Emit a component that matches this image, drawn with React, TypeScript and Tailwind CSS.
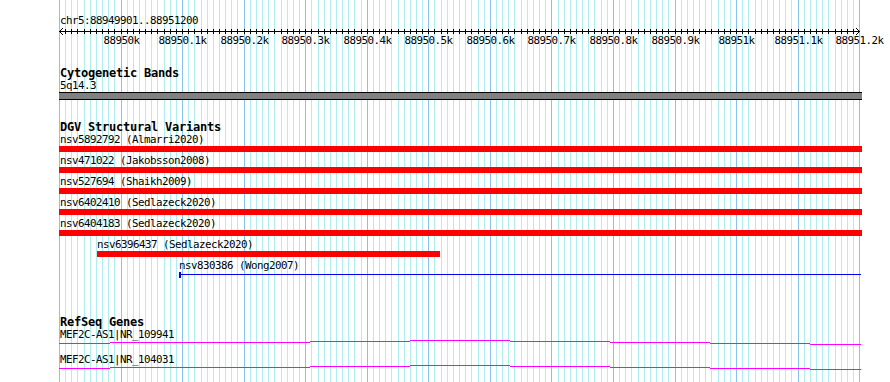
const START = 88949900;
const SCALE = 0.6155;
const LEFT = 59;
const RIGHT = 862;

const px = (bp: number) => Math.round(LEFT + (bp - START) * SCALE);

const gridLines = Array.from({ length: 131 }, (_, i) => START + i * 10);

const tickLabels = [
  [88950000, "88950k"],
  [88950100, "88950.1k"],
  [88950200, "88950.2k"],
  [88950300, "88950.3k"],
  [88950400, "88950.4k"],
  [88950500, "88950.5k"],
  [88950600, "88950.6k"],
  [88950700, "88950.7k"],
  [88950800, "88950.8k"],
  [88950900, "88950.9k"],
  [88951000, "88951k"],
  [88951100, "88951.1k"],
  [88951200, "88951.2k"],
] as const;

type Variant = {
  name: string;
  start: number;
  end: number;
  kind: "bar" | "line";
};

const variants: Variant[] = [
  { name: "nsv5892792 (Almarri2020)", start: 88949000, end: 88952000, kind: "bar" },
  { name: "nsv471022 (Jakobsson2008)", start: 88949000, end: 88952000, kind: "bar" },
  { name: "nsv527694 (Shaikh2009)", start: 88949000, end: 88952000, kind: "bar" },
  { name: "nsv6402410 (Sedlazeck2020)", start: 88949000, end: 88952000, kind: "bar" },
  { name: "nsv6404183 (Sedlazeck2020)", start: 88949000, end: 88952000, kind: "bar" },
  { name: "nsv6396437 (Sedlazeck2020)", start: 88949962, end: 88950519, kind: "bar" },
  { name: "nsv830386 (Wong2007)", start: 88950095, end: 88952000, kind: "line" },
];

const genes = ["MEF2C-AS1|NR_109941", "MEF2C-AS1|NR_104031"];

// intron connector, drawn stepwise like the original raster
const geneSteps = [
  [59, 110, 3],
  [110, 310, 2],
  [310, 410, 1],
  [410, 510, 0],
  [510, 610, 1],
  [610, 710, 2],
  [710, 810, 3],
  [810, 861, 4],
];

function GridLines() {
  return (
    <svg
      className="absolute inset-0"
      width={890}
      height={382}
      shapeRendering="crispEdges">
      {gridLines.map((bp) => {
        const major = (bp - START) % 100 === 0;
        return (
          <rect
            key={bp}
            x={px(bp)}
            y={0}
            width={1}
            height={382}
            fill={major ? "#86c4ee" : "#aeeef0"}
          />
        );
      })}
    </svg>
  );
}

function Ruler() {
  return (
    <div className="relative h-[20px]">
      <svg className="block" width={890} height={8} shapeRendering="crispEdges">
        <rect x={LEFT} y={4} width={801} height={1} fill="#000" />
        {gridLines.slice(1, -1).map((bp) => (
          <rect key={bp} x={px(bp)} y={2} width={1} height={5} fill="#000" />
        ))}
        <polyline
          points="63,1 59.5,4.5 63,8"
          fill="none"
          stroke="#000"
          shapeRendering="auto"
        />
        <polyline
          points="856,1 859.5,4.5 856,8"
          fill="none"
          stroke="#000"
          shapeRendering="auto"
        />
      </svg>
      {tickLabels.map(([bp, label]) => (
        <span
          key={bp}
          className="absolute top-[8px] -translate-x-1/2 whitespace-nowrap"
          style={{ left: px(bp) + 0.5 }}>
          {label}
        </span>
      ))}
    </div>
  );
}

function TrackTitle({ children }: { children: string }) {
  return (
    <div className="translate-y-px pl-[60px] text-[12px] leading-[13px] font-bold tracking-[-0.22px]">
      {children}
    </div>
  );
}

function VariantRow({ v }: { v: Variant }) {
  const x0 = Math.max(px(v.start), LEFT);
  const x1 = Math.min(px(v.end), RIGHT);
  return (
    <div className="flex h-[21px] flex-col gap-px">
      <div
        className="h-[12px] translate-y-px whitespace-nowrap"
        style={{ paddingLeft: Math.max(x0, 60) }}>
        {v.name}
      </div>
      {v.kind === "bar" ? (
        <div className="h-[6px] bg-[#ff0000]" style={{ marginLeft: x0, width: x1 - x0 }} />
      ) : (
        <div className="flex h-[6px] items-start" style={{ marginLeft: x0, width: x1 - 1 - x0 }}>
          <div className="h-[6px] w-[2px] bg-[#0000ee]" />
          <div className="mt-[2px] h-px flex-1 bg-[#0000ee]" />
        </div>
      )}
    </div>
  );
}

function GeneRow({ name }: { name: string }) {
  return (
    <div className="flex h-[25px] flex-col">
      <div className="h-[12px] translate-y-px pl-[60px]">{name}</div>
      <svg className="block" width={890} height={13} shapeRendering="crispEdges">
        {geneSteps.map(([a, b, y]) => (
          <rect key={a} x={a} y={y} width={b - a} height={1} fill="#ff00ff" />
        ))}
      </svg>
    </div>
  );
}

export default function App() {
  return (
    <div className="relative h-[382px] w-[890px] overflow-hidden bg-white font-['DejaVu_Sans_Mono',monospace] text-[10.8px] leading-[12px] tracking-[-0.5px] text-black">
      <GridLines />
      <div className="relative flex flex-col pt-[15px]">
        <div className="pl-[60px]">chr5:88949901..88951200</div>
        <Ruler />

        <section className="mt-[19px] flex flex-col">
          <TrackTitle>Cytogenetic Bands</TrackTitle>
          <div className="h-[13px] translate-y-px pl-[60px]">5q14.3</div>
          <div className="ml-[59px] h-[8px] w-[803px] border-y border-black bg-[#808080]" />
        </section>

        <section className="mt-[20px] flex flex-col">
          <TrackTitle>DGV Structural Variants</TrackTitle>
          <div className="flex flex-col">
            {variants.map((v) => (
              <VariantRow key={v.name} v={v} />
            ))}
          </div>
        </section>

        <section className="mt-[35px] flex flex-col">
          <TrackTitle>RefSeq Genes</TrackTitle>
          <div className="flex flex-col">
            {genes.map((g) => (
              <GeneRow key={g} name={g} />
            ))}
          </div>
        </section>
      </div>
    </div>
  );
}
